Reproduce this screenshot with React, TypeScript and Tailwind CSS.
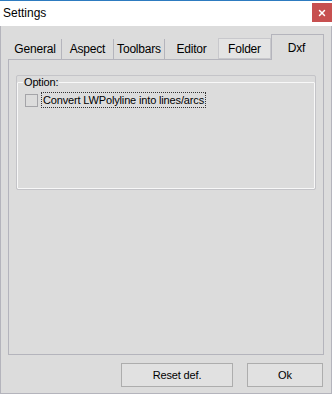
import { X } from 'lucide-react'

const tabs = [
  { label: 'General', w: 'w-[53px]' },
  { label: 'Aspect', w: 'w-[52px]' },
  { label: 'Toolbars', w: 'w-[51px]' },
  { label: 'Editor', w: 'w-[53px]' },
]

export default function App() {
  return (
    <div className="w-[332px] h-[394px] flex flex-col bg-[#dcdcdc] border-t border-[#2d7bc0] text-[11px] tracking-[-0.15px] text-black font-['Liberation_Sans',Arial,sans-serif] overflow-hidden">
      {/* Title bar */}
      <div className="h-[25px] bg-white flex items-start justify-between shrink-0">
        <span className="pl-[3px] pt-[4px] text-[12px] tracking-normal leading-[16px]">Settings</span>
        <button className="w-[20px] h-[19px] mt-[2px] bg-[#c75050] flex items-center justify-center">
          <X className="w-[10px] h-[10px] text-white" strokeWidth={3.5} />
        </button>
      </div>

      {/* Body */}
      <div className="flex-1 flex flex-col border-x border-b border-[#b4b4bc] px-[7px] pt-[7px]">
        {/* Tabs */}
        <div className="flex items-end h-[26px] pl-[1px] text-[12px] tracking-[-0.2px]">
          {tabs.map((t, i) => (
            <div
              key={t.label}
              className={`${t.w} h-[20px] flex items-center justify-center ${i < tabs.length - 1 ? 'border-r border-[#b4b4bc]' : ''}`}
            >
              {t.label}
            </div>
          ))}
          <div className="w-[53px] h-[21px] flex items-center justify-center bg-[#e4e4e4] border border-b-0 border-[#f4f4f4] outline outline-1 outline-[#c8c8cc] -outline-offset-1">
            Folder
          </div>
          <div className="w-[53px] h-[26px] flex items-start justify-center pt-[4px] border border-b-0 border-[#b4b4bc] -mb-[1px] bg-[#dcdcdc] relative z-10">
            <span className="-ml-[2px]">Dxf</span>
          </div>
        </div>

        {/* Panel */}
        <div className="w-[316px] h-[296px] border border-[#b4b4bc] px-[8px] pt-[16px]">
          <fieldset className="h-[113px] border border-[#f8f8f8] outline outline-1 outline-[#c4c4c8] rounded-[1px] pl-[7px] pr-[6px] m-0">
            <legend className="px-[1px] ml-[-2px] leading-[13px]">Option:</legend>
            <label className="flex items-center mt-[3px]">
              <span className="w-[13px] h-[13px] border border-[#a4a4a8] bg-[#dcdcdc] shrink-0" />
              <span className="ml-[3px] px-[1px] leading-[14px] border border-dotted border-[#333]">
                Convert LWPolyline into lines/arcs
              </span>
            </label>
          </fieldset>
        </div>

        {/* Buttons */}
        <div className="flex justify-end gap-[14px] mt-[8px] pr-[1px]">
          <button className="w-[112px] h-[24px] bg-[#e1e1e1] border border-[#adadad]">Reset def.</button>
          <button className="w-[76px] h-[24px] bg-[#e1e1e1] border border-[#adadad]">Ok</button>
        </div>
      </div>
    </div>
  )
}
